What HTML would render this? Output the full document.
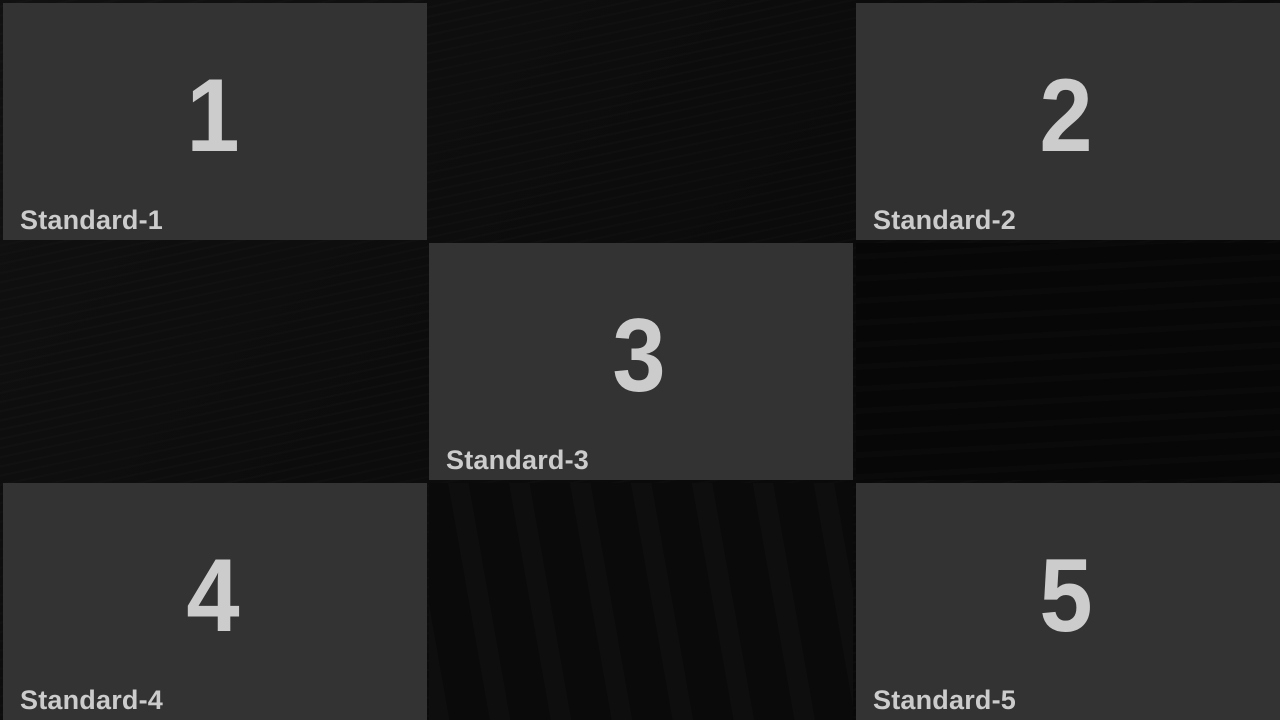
<!DOCTYPE html>
<html><head><meta charset="utf-8"><style>
html,body{margin:0;padding:0;width:1280px;height:720px;overflow:hidden;background:#0a0a0a;}
body{position:relative;font-family:"Liberation Sans",sans-serif;
background:
repeating-linear-gradient(-12deg,rgba(255,255,255,0.012) 0 2px,transparent 2px 9px),
linear-gradient(135deg,#111 0%,#0b0b0b 50%,#060606 100%);}
.bg{position:absolute;}
.t{position:absolute;background:#333;width:424px;height:237px;}
.n{position:absolute;left:0;right:4px;top:61px;text-align:center;color:#ccc;font-weight:bold;font-size:104px;line-height:104px;transform:scaleX(0.92);}
.l{position:absolute;left:17px;top:201px;color:#ccc;font-weight:bold;font-size:27px;line-height:32px;letter-spacing:0.2px;}
</style></head><body>
<div class="bg" style="left:429px;top:483px;width:424px;height:237px;background:repeating-linear-gradient(80deg,rgba(255,255,255,0.015) 0 20px,transparent 20px 60px),#0a0a0a;"></div>
<div class="bg" style="left:856px;top:243px;width:424px;height:237px;background:repeating-linear-gradient(-3deg,rgba(255,255,255,0.012) 0 6px,transparent 6px 22px),#070707;"></div>
<div class="t" style="left:3px;top:3px"><div class="n">1</div><div class="l">Standard-1</div></div>
<div class="t" style="left:856px;top:3px"><div class="n">2</div><div class="l">Standard-2</div></div>
<div class="t" style="left:429px;top:243px"><div class="n">3</div><div class="l">Standard-3</div></div>
<div class="t" style="left:3px;top:483px"><div class="n">4</div><div class="l">Standard-4</div></div>
<div class="t" style="left:856px;top:483px"><div class="n">5</div><div class="l">Standard-5</div></div>
</body></html>
